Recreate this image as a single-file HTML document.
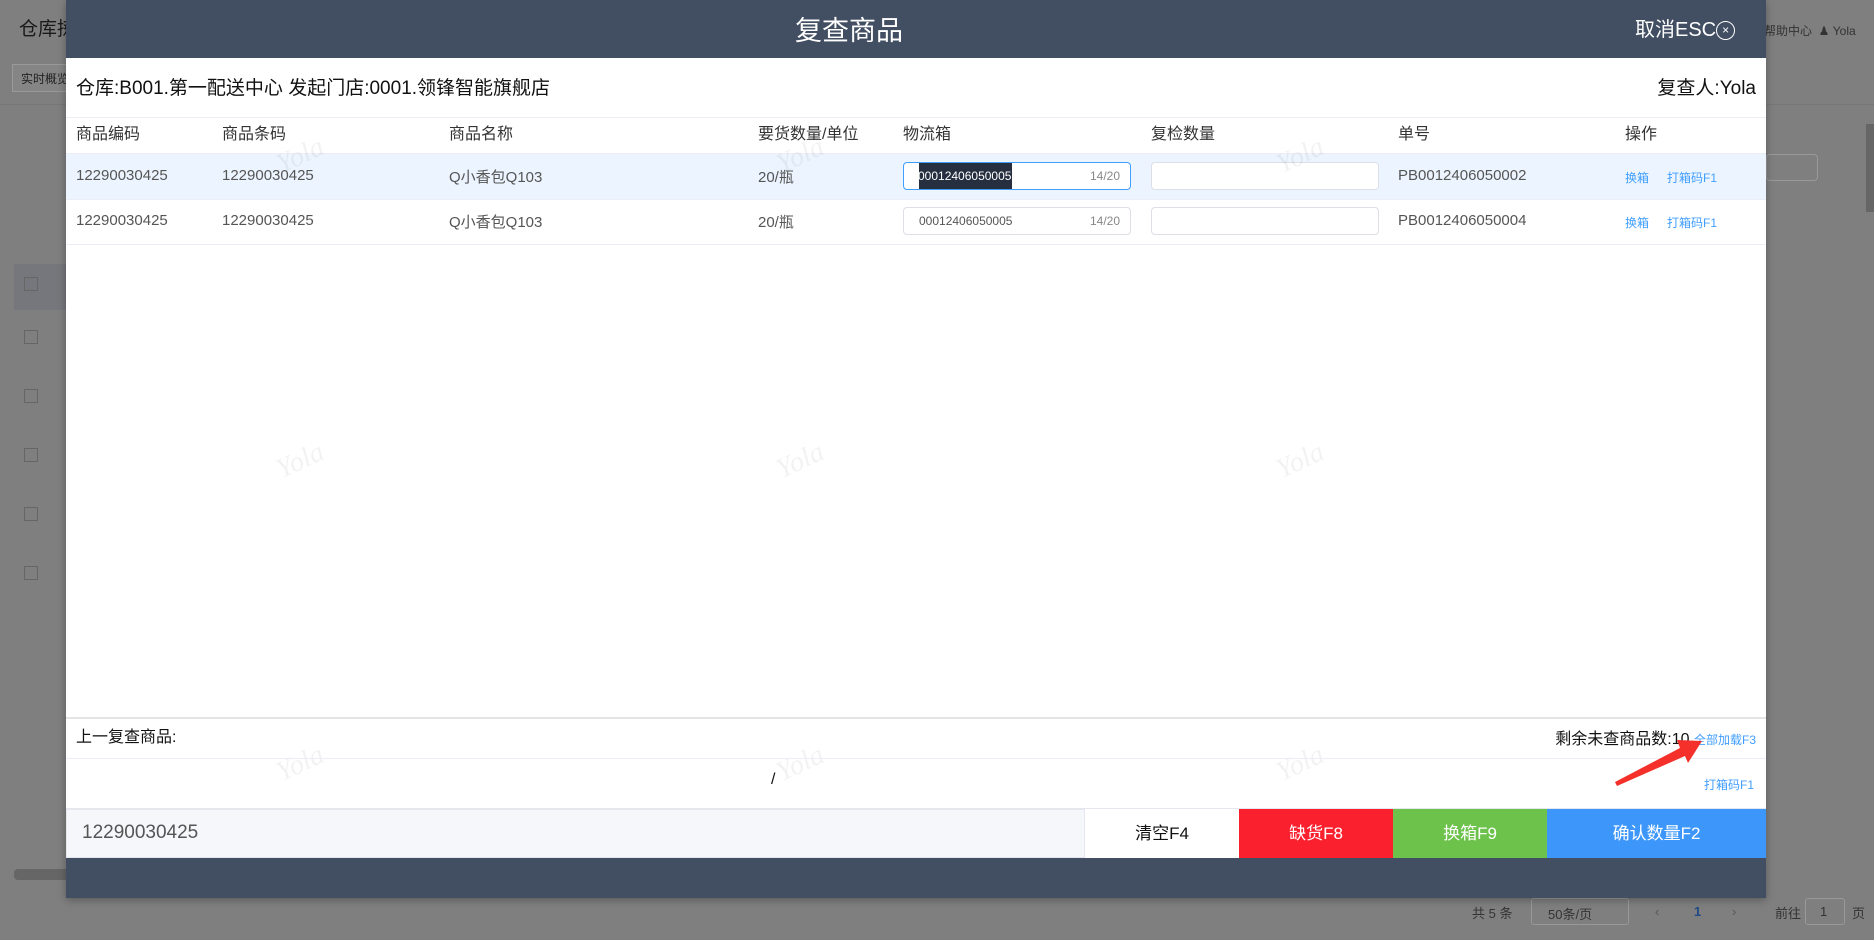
<!DOCTYPE html>
<html><head><meta charset="utf-8"><style>
*{margin:0;padding:0;box-sizing:border-box}
body{width:1874px;height:940px;overflow:hidden;background:#7f7f7f;font-family:"Liberation Sans","Noto Sans CJK SC",sans-serif;position:relative}
.a{position:absolute}
.bg-top{left:0;top:0;width:1874px;height:58px;background:#7f7f7f}
.modal{left:66px;top:0;width:1700px;height:898px;background:#fff;box-shadow:0 2px 8px rgba(0,0,0,.3)}
.hd{left:0;top:0;width:1700px;height:58px;background:#424f63;color:#fff}
.t{white-space:nowrap}
.th{font-size:16px;color:#333;top:120px}
.td{font-size:15px;color:#555}
.inp{border:1px solid #dcdfe6;border-radius:4px;background:#fff;height:28px}
.lnk{color:#409eff;font-size:12px}
.hl{height:1px;background:#ebeef5;left:0;width:1700px}
.wm{color:rgba(0,0,0,.05);font-family:"Liberation Serif",serif;font-style:italic;font-size:28px;transform:rotate(-25deg)}
.btn{top:809px;height:49px;color:#fff;font-size:17px;text-align:center;line-height:49px}
</style></head><body>
<div class="a bg-top"></div>
<div class="a t" style="left:19px;top:14px;font-size:19px;color:#1a1a1a">仓库拣</div>
<div class="a" style="left:12px;top:64px;width:60px;height:28px;border:1px solid #999;background:#858585"></div>
<div class="a t" style="left:21px;top:70px;font-size:12px;color:#222">实时概览</div>
<div class="a" style="left:0;top:104px;width:1874px;height:1px;background:#777"></div>
<div class="a" style="left:14px;top:264px;width:60px;height:46px;background:#75777c"></div>
<div class="a" style="left:24px;top:277px;width:14px;height:14px;border:1px solid #666"></div>
<div class="a" style="left:24px;top:330px;width:14px;height:14px;border:1px solid #666"></div>
<div class="a" style="left:24px;top:389px;width:14px;height:14px;border:1px solid #666"></div>
<div class="a" style="left:24px;top:448px;width:14px;height:14px;border:1px solid #666"></div>
<div class="a" style="left:24px;top:507px;width:14px;height:14px;border:1px solid #666"></div>
<div class="a" style="left:24px;top:566px;width:14px;height:14px;border:1px solid #666"></div>
<div class="a" style="left:14px;top:869px;width:60px;height:11px;background:#666;border-radius:4px"></div>
<div class="a t" style="left:1764px;top:22px;font-size:12px;color:#333">帮助中心 &nbsp;&#9823; Yola</div>
<div class="a" style="left:1766px;top:154px;width:52px;height:27px;border:1px solid #999;border-radius:4px"></div>
<div class="a" style="left:1866px;top:124px;width:8px;height:88px;background:#666"></div>
<div class="a t" style="left:1472px;top:903px;font-size:13px;color:#333">共 5 条</div>
<div class="a" style="left:1531px;top:898px;width:98px;height:27px;border:1px solid #999;border-radius:3px"></div>
<div class="a t" style="left:1548px;top:904px;font-size:13px;color:#333">50条/页</div>
<div class="a t" style="left:1655px;top:904px;font-size:13px;color:#555">‹</div>
<div class="a t" style="left:1694px;top:904px;font-size:13px;color:#1f4a86;font-weight:bold">1</div>
<div class="a t" style="left:1732px;top:904px;font-size:13px;color:#555">›</div>
<div class="a t" style="left:1775px;top:903px;font-size:13px;color:#333">前往</div>
<div class="a" style="left:1805px;top:898px;width:40px;height:27px;border:1px solid #999;border-radius:3px"></div>
<div class="a t" style="left:1820px;top:904px;font-size:13px;color:#333">1</div>
<div class="a t" style="left:1852px;top:903px;font-size:13px;color:#333">页</div>

<div class="a modal">
 <div class="a hd">
  <div class="a t" style="left:729px;top:9px;font-size:27px">复查商品</div>
  <div class="a t" style="left:1569px;top:13px;font-size:20px">取消ESC<span style="display:inline-block;width:19px;height:19px;border:1.5px solid #fff;border-radius:50%;font-size:12px;line-height:16px;text-align:center;vertical-align:2px">×</span></div>
 </div>
 <div class="a t" style="left:10px;top:73px;font-size:19px;color:#111">仓库:B001.第一配送中心 发起门店:0001.领锋智能旗舰店</div>
 <div class="a t" style="right:10px;top:73px;font-size:19px;color:#111">复查人:Yola</div>
 <div class="a hl" style="top:117px"></div>
 <div class="a th t" style="left:10px">商品编码</div>
 <div class="a th t" style="left:156px">商品条码</div>
 <div class="a th t" style="left:383px">商品名称</div>
 <div class="a th t" style="left:692px">要货数量/单位</div>
 <div class="a th t" style="left:837px">物流箱</div>
 <div class="a th t" style="left:1085px">复检数量</div>
 <div class="a th t" style="left:1332px">单号</div>
 <div class="a th t" style="left:1559px">操作</div>
 <div class="a hl" style="top:153px"></div>
 <div class="a" style="left:0;top:154px;width:1700px;height:45px;background:#ecf5ff"></div>
 <div class="a hl" style="top:199px"></div>
 <div class="a hl" style="top:244px"></div>
 <div class="a td t" style="left:10px;top:167px">12290030425</div>
 <div class="a td t" style="left:156px;top:167px">12290030425</div>
 <div class="a td t" style="left:383px;top:166px">Q小香包Q103</div>
 <div class="a td t" style="left:692px;top:166px">20/瓶</div>
 <div class="a inp" style="left:837px;top:162px;width:228px;border-color:#409eff"></div>
 <div class="a" style="left:853px;top:163px;width:93px;height:26px;background:#262f3f"></div>
 <div class="a t" style="left:852px;top:169px;font-size:12px;color:#fff">00012406050005</div>
 <div class="a t" style="left:1024px;top:169px;font-size:12px;color:#888">14/20</div>
 <div class="a inp" style="left:1085px;top:162px;width:228px"></div>
 <div class="a td t" style="left:1332px;top:167px">PB0012406050002</div>
 <div class="a lnk t" style="left:1559px;top:169px">换箱</div>
 <div class="a lnk t" style="left:1601px;top:169px">打箱码F1</div>
 <div class="a td t" style="left:10px;top:212px">12290030425</div>
 <div class="a td t" style="left:156px;top:212px">12290030425</div>
 <div class="a td t" style="left:383px;top:211px">Q小香包Q103</div>
 <div class="a td t" style="left:692px;top:211px">20/瓶</div>
 <div class="a inp" style="left:837px;top:207px;width:228px"></div>
 <div class="a t" style="left:853px;top:214px;font-size:12px;color:#555">00012406050005</div>
 <div class="a t" style="left:1024px;top:214px;font-size:12px;color:#888">14/20</div>
 <div class="a inp" style="left:1085px;top:207px;width:228px"></div>
 <div class="a td t" style="left:1332px;top:212px">PB0012406050004</div>
 <div class="a lnk t" style="left:1559px;top:214px">换箱</div>
 <div class="a lnk t" style="left:1601px;top:214px">打箱码F1</div>

 <div class="a wm t" style="left:210px;top:140px">Yola</div>
 <div class="a wm t" style="left:710px;top:140px">Yola</div>
 <div class="a wm t" style="left:1210px;top:140px">Yola</div>
 <div class="a wm t" style="left:210px;top:445px">Yola</div>
 <div class="a wm t" style="left:710px;top:445px">Yola</div>
 <div class="a wm t" style="left:1210px;top:445px">Yola</div>
 <div class="a wm t" style="left:210px;top:748px">Yola</div>
 <div class="a wm t" style="left:710px;top:748px">Yola</div>
 <div class="a wm t" style="left:1210px;top:748px">Yola</div>

 <div class="a" style="top:717px;left:0;width:1700px;height:2px;background:#e4e4e4"></div>
 <div class="a t" style="left:10px;top:723px;font-size:16px;color:#111">上一复查商品:</div>
 <div class="a t" style="right:10px;top:725px;font-size:16px;color:#111">剩余未查商品数:10 <span style="color:#409eff;font-size:12px">全部加载F3</span></div>
 <div class="a hl" style="top:758px"></div>
 <div class="a t" style="left:705px;top:771px;font-size:16px;color:#111">/</div>
 <div class="a lnk t" style="right:12px;top:776px">打箱码F1</div>
 <div class="a" style="left:0;top:808px;width:1700px;height:1px;background:#e4e7ed"></div>
 <div class="a" style="left:0;top:809px;width:1019px;height:49px;background:#f5f7fa;border:1px solid #e4e7ed"></div>
 <div class="a t" style="left:16px;top:822px;font-size:19px;color:#555">12290030425</div>
 <div class="a btn" style="left:1019px;width:154px;background:#fff;color:#111">清空F4</div>
 <div class="a btn" style="left:1173px;width:154px;background:#fb202e">缺货F8</div>
 <div class="a btn" style="left:1327px;width:154px;background:#6cc24a">换箱F9</div>
 <div class="a btn" style="left:1481px;width:219px;background:#3d97fb">确认数量F2</div>
 <div class="a" style="left:0;top:858px;width:1700px;height:40px;background:#424f63"></div>
</div>
<svg class="a" style="left:0;top:0" width="1874" height="940">
 <polygon points="1617,786 1615,782 1680,748 1677,740 1702,741 1688,763 1685,756" fill="#f5302b"/>
</svg>
</body></html>
